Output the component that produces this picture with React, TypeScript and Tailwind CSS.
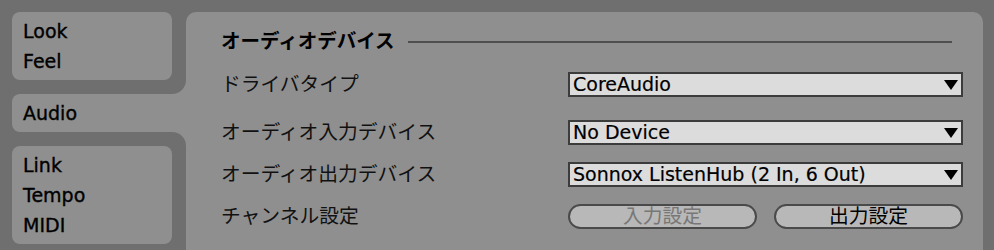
import React from "react";

function Dropdown({ children }: { children: React.ReactNode }) {
  return (
    <div className="w-[395px] h-[25px] border-2 border-[#3c3c3c] bg-[#dcdcdc] flex items-center pl-[3px] pr-[3px] text-[19px] leading-none text-black">
      <span className="flex-1 whitespace-nowrap [-webkit-text-stroke:0.2px_black]">{children}</span>
      <svg width="14" height="10" viewBox="0 0 14 10" className="block">
        <polygon points="0,0 14,0 7,10" fill="#000" />
      </svg>
    </div>
  );
}

function Row({ label, children, className }: { label: string; children: React.ReactNode; className: string }) {
  return (
    <div className={"flex items-center h-[25px] " + className}>
      <div className="flex-1 text-[19.75px] leading-none text-[#111] whitespace-nowrap">{label}</div>
      {children}
    </div>
  );
}

export default function App() {
  return (
    <div className="w-full h-[250px] overflow-hidden bg-[#6f6f6f] flex pt-[12px] pl-[12px] pr-[11px] font-['DejaVu_Sans','Noto_Sans_CJK_JP',sans-serif] text-black">
      {/* Sidebar */}
      <div className="w-[174px] flex flex-col shrink-0">
        <div className="bg-[#8f8f8f]">
          <div className="bg-[#6f6f6f] rounded-br-[14px] pr-[14px] pb-[14px]">
            <div className="bg-[#8f8f8f] rounded-[8px] px-[11px] py-[4px] text-[19px] leading-[30px] [-webkit-text-stroke:0.35px_black]">
              <div>Look</div>
              <div>Feel</div>
            </div>
          </div>
        </div>
        <div className="bg-[#8f8f8f] rounded-l-[8px] h-[38px] pl-[11px] flex items-center text-[19px] leading-none [-webkit-text-stroke:0.35px_black]">
          Audio
        </div>
        <div className="bg-[#8f8f8f] flex-1 flex">
          <div className="bg-[#6f6f6f] rounded-tr-[14px] pt-[14px] pr-[14px] flex-1">
            <div className="bg-[#8f8f8f] rounded-[8px] px-[11px] py-[4px] text-[19px] leading-[30px] [-webkit-text-stroke:0.35px_black]">
              <div>Link</div>
              <div>Tempo</div>
              <div>MIDI</div>
            </div>
          </div>
        </div>
      </div>

      {/* Main panel */}
      <div className="flex-1 bg-[#8f8f8f] rounded-t-[10px] pl-[35px] pr-[20px] pt-[18px]">
        <div className="flex items-center h-[24px]">
          <span className="font-bold text-[19.5px] leading-none whitespace-nowrap">オーディオデバイス</span>
          <div className="flex-1 h-[2px] bg-[#4f4f4f] ml-[13px] mr-[11px]" />
        </div>
        <Row label="ドライバタイプ" className="mt-[18px]">
          <Dropdown>CoreAudio</Dropdown>
        </Row>
        <Row label="オーディオ入力デバイス" className="mt-[23px]">
          <Dropdown>No Device</Dropdown>
        </Row>
        <Row label="オーディオ出力デバイス" className="mt-[17px]">
          <Dropdown>Sonnox ListenHub (2 In, 6 Out)</Dropdown>
        </Row>
        <Row label="チャンネル設定" className="mt-[17px]">
          <div className="w-[395px] flex gap-[17px]">
            <div className="w-[189px] h-[25px] rounded-full border-2 border-[#4a4a4a] bg-[#b8b8b8] flex items-center justify-center text-[19.75px] leading-none text-[#777777]">
              入力設定
            </div>
            <div className="w-[189px] h-[25px] rounded-full border-2 border-[#4a4a4a] bg-[#b8b8b8] flex items-center justify-center text-[19.75px] leading-none text-black">
              出力設定
            </div>
          </div>
        </Row>
      </div>
    </div>
  );
}
